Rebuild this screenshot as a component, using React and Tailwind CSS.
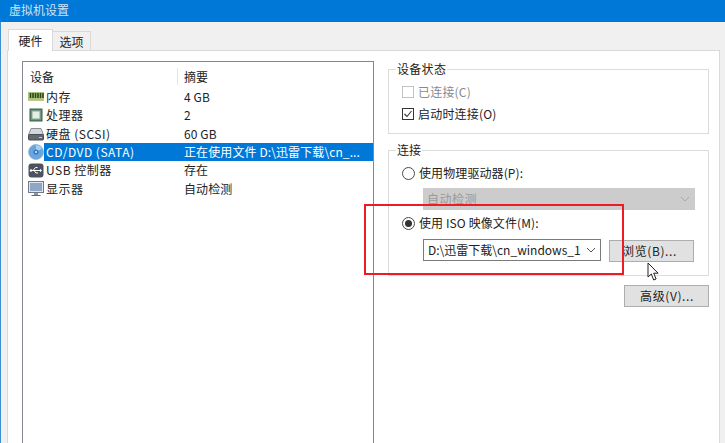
import React from 'react';

const font = { fontFamily: '"Noto Sans CJK SC", "Noto Sans", sans-serif' };

const MemoryIcon = () => (
  <svg width="16" height="14" viewBox="0 0 16 14">
    <rect x="0" y="2" width="16" height="9" fill="#a9c77c" />
    <path d="M2.5 3v5M5 3v5M7.5 3v5M10 3v5M12.5 3v5M15 3v5" stroke="#2c4420" strokeWidth="1.6" />
    <path d="M0 10.5h16" stroke="#c9c88a" />
  </svg>
);

const CpuIcon = () => (
  <svg width="16" height="14" viewBox="0 0 16 14">
    <rect x="2" y="1" width="12" height="12" fill="#5d8a70" stroke="#3f6350" />
    <rect x="4" y="3" width="8" height="8" fill="#e4eee2" stroke="#8aa893" />
  </svg>
);

const DiskIcon = () => (
  <svg width="16" height="14" viewBox="0 0 16 14">
    <path d="M3 1.5h10l2.5 6.5h-15z" fill="#d4d6da" stroke="#8a8d94" />
    <rect x="0.5" y="7.5" width="15" height="5.5" rx="1" fill="#63676e" stroke="#4a4d53" />
    <rect x="11" y="10" width="3" height="1" fill="#c8cbd0" />
  </svg>
);

const DiscIcon = () => (
  <svg width="16" height="16" viewBox="0 0 16 16">
    <circle cx="8" cy="8" r="7.5" fill="#6aa6dc" stroke="#8fb4d6" strokeWidth="0.8" />
    <path d="M8 1a7 7 0 0 1 6 3.5L8 8z" fill="#a9cff0" />
    <circle cx="8" cy="8" r="2.6" fill="#2f7cc4" />
    <circle cx="8" cy="8" r="1" fill="#e6f0fa" />
  </svg>
);

const UsbIcon = () => (
  <svg width="16" height="15" viewBox="0 0 16 15">
    <rect x="0.5" y="0.5" width="15" height="14" rx="3" fill="#4b5361" />
    <path d="M2.5 7.5h10M5 7.5l2.5-3h2M6 7.5l2 2.5h2" stroke="#fff" strokeWidth="1" fill="none" />
    <path d="M12 5.8l2 1.7-2 1.7z" fill="#fff" />
    <circle cx="3" cy="7.5" r="1.2" fill="#fff" />
  </svg>
);

const MonitorIcon = () => (
  <svg width="16" height="16" viewBox="0 0 16 16">
    <rect x="0.5" y="0.5" width="15" height="11" fill="#dfe6ef" stroke="#6f7a8a" />
    <rect x="2" y="2" width="12" height="8" fill="#8fa6c4" />
    <path d="M6 12h4v2H6z" fill="#8d96a3" />
    <path d="M3.5 14.5h9" stroke="#5f6875" />
  </svg>
);

const Chevron = ({ color }) => (
  <svg width="10" height="6" viewBox="0 0 10 6">
    <path d="M1 1l4 4 4-4" fill="none" stroke={color} strokeWidth="1" />
  </svg>
);

const rows = [
  { icon: <MemoryIcon />, name: '内存', value: '4 GB' },
  { icon: <CpuIcon />, name: '处理器', value: '2' },
  { icon: <DiskIcon />, name: '硬盘 (SCSI)', value: '60 GB' },
  { icon: <DiscIcon />, name: 'CD/DVD (SATA)', value: '正在使用文件 D:\\迅雷下载\\cn_...', selected: true },
  { icon: <UsbIcon />, name: 'USB 控制器', value: '存在' },
  { icon: <MonitorIcon />, name: '显示器', value: '自动检测' },
];

const Radio = ({ checked }) => (
  <span className="w-[13px] h-[13px] rounded-full border border-[#4a4a4a] bg-white flex items-center justify-center shrink-0">
    {checked && <span className="w-[7px] h-[7px] rounded-full bg-[#333]" />}
  </span>
);

const Button = ({ children, className }) => (
  <div className={`w-[85px] h-[22px] bg-[#e1e1e1] border border-[#adadad] flex items-center justify-center text-[12px] tracking-[0.6px] text-[#222] ${className}`}>
    {children}
  </div>
);

export default function App() {
  return (
    <div className="relative w-[725px] h-[443px] overflow-hidden bg-[#f0f0f0] text-[12px] text-[#222] flex flex-col" style={font}>
      {/* Title bar */}
      <div className="h-[22px] bg-[#0078d7] pl-[9px] pb-[2px] flex items-center text-[12px] leading-none text-[#cfe4f6] shrink-0">
        虚拟机设置
      </div>

      <div className="flex-1 flex flex-col pl-[6px] pr-[5px] border-l border-[#3d8fd1] min-h-0">
        {/* Tabs */}
        <div className="h-[28px] flex items-end pl-[1px] shrink-0">
          <div className="w-[45px] h-[22px] bg-white border border-b-0 border-[#d9d9d9] flex items-center justify-center relative top-px z-10">硬件</div>
          <div className="w-[38px] h-[19px] bg-[#f0f0f0] border border-l-0 border-b-0 border-[#d9d9d9] flex items-center justify-center pt-[2px]">选项</div>
        </div>

        {/* Panel */}
        <div className="flex-1 bg-white border-t border-x border-[#d9d9d9] flex pl-[14px] pt-[10px] min-h-0">
          {/* Device list */}
          <div className="w-[352px] border-x border-t border-[#828790] shrink-0 pt-[6px]">
            <div className="flex h-[17px] items-center">
              <div className="w-[154px] pl-[7px]">设备</div>
              <div className="pl-[6px] border-l border-[#e5e5e5] h-[17px] flex items-center">摘要</div>
            </div>
            <div className="mt-[3px]">
              {rows.map((row) => (
                <div key={row.name} className="flex h-[18.3px] items-center">
                  <div className="w-[21px] pl-[5px] flex items-center justify-start shrink-0">{row.icon}</div>
                  <div className={`flex-1 h-full flex items-center ${row.selected ? 'bg-[#0078d7] text-white' : ''}`}>
                    <div className="w-[140px] pl-[2px] whitespace-nowrap tracking-[0.5px]">{row.name}</div>
                    <div className="whitespace-nowrap tracking-[0.1px]">{row.value}</div>
                  </div>
                </div>
              ))}
            </div>
          </div>

          {/* Settings */}
          <div className="w-[321px] ml-[14px] pt-[2px]">
            <fieldset className="border border-[#dcdcdc] h-[71px] pl-[13px]">
              <legend className="-ml-[6px] px-[1px] leading-none text-[12px] tracking-[0.3px]">设备状态</legend>
              <div className="flex items-center gap-[4px] h-[20px] mt-[7px] text-[#8a8a8a] tracking-[0.2px]">
                <span className="w-[12px] h-[12px] border border-[#c4c4c4] bg-white shrink-0" />
                已连接(C)
              </div>
              <div className="flex items-center gap-[4px] h-[20px] mt-[1.5px] tracking-[0.2px]">
                <span className="w-[12px] h-[12px] border border-[#333] bg-white shrink-0 flex items-center justify-center">
                  <svg width="10" height="10" viewBox="0 0 10 10">
                    <path d="M1.5 5l2.5 2.5 4.5-5.5" fill="none" stroke="#333" strokeWidth="1.1" />
                  </svg>
                </span>
                启动时连接(O)
              </div>
            </fieldset>

            <fieldset className="border border-[#dcdcdc] h-[132px] mt-[10px] pl-[13px]">
              <legend className="-ml-[6px] px-[1px] leading-none text-[12px]">连接</legend>
              <div className="flex items-center gap-[4px] h-[20px] mt-[7px] tracking-[0.1px]">
                <Radio />
                使用物理驱动器(P):
              </div>
              <div className="ml-[21px] mt-[5px] w-[272px] h-[22px] bg-[#cccccc] text-[#9a9a9a] flex items-center justify-between pl-[4px] pr-[5px] tracking-[0.5px]">
                自动检测
                <Chevron color="#a8a8a8" />
              </div>
              <div className="flex items-center gap-[4px] h-[20px] mt-[3px] tracking-[0.1px]">
                <Radio checked />
                使用 ISO 映像文件(M):
              </div>
              <div className="flex items-start mt-[6px] ml-[21px]">
                <div className="w-[178px] h-[22px] border border-[#7a7a7a] bg-white flex items-center justify-between pl-[4px] pr-[4px] whitespace-nowrap">
                  D:\迅雷下载\cn_windows_1
                  <Chevron color="#555" />
                </div>
                <Button className="ml-[8px] mt-[1px] pr-[4px]">浏览(B)...</Button>
              </div>
            </fieldset>

            <Button className="ml-auto mt-[9px] pl-[1px]">高级(V)...</Button>
          </div>
        </div>
      </div>

      {/* Red annotation */}
      <div className="absolute left-[364px] top-[204px] w-[260px] h-[71px] border-2 border-[#ed1c24]" />

      {/* Mouse cursor */}
      <svg className="absolute left-[647px] top-[262px]" width="13" height="20" viewBox="0 0 13 20">
        <path d="M1 1v14l3.3-3 2.4 6 2.4-1-2.4-5.8h4.4z" fill="#fff" stroke="#222" strokeWidth="1" />
      </svg>
    </div>
  );
}
